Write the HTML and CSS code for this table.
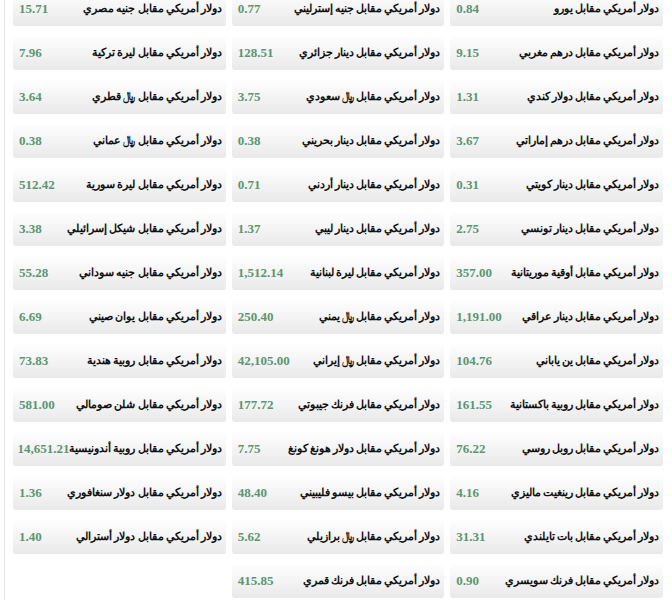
FILE: index.html
```html
<!DOCTYPE html>
<html lang="ar" dir="rtl">
<head>
  <meta charset="UTF-8" />
  <meta name="viewport" content="width=device-width, initial-scale=1" />
  <title>أسعار الدولار الأمريكي</title>
  <link rel="stylesheet" href="styles.css">
</head>
<body>

  <div class="wrap">
    <div class="rates">
      <div class="rate"><span class="name">دولار أمريكي مقابل يورو</span><span class="val">0.84</span></div>
      <div class="rate"><span class="name">دولار أمريكي مقابل جنيه إسترليني</span><span class="val">0.77</span></div>
      <div class="rate"><span class="name">دولار أمريكي مقابل جنيه مصري</span><span class="val">15.71</span></div>

      <div class="rate"><span class="name">دولار أمريكي مقابل درهم مغربي</span><span class="val">9.15</span></div>
      <div class="rate"><span class="name">دولار أمريكي مقابل دينار جزائري</span><span class="val">128.51</span></div>
      <div class="rate"><span class="name">دولار أمريكي مقابل ليرة تركية</span><span class="val">7.96</span></div>

      <div class="rate"><span class="name">دولار أمريكي مقابل دولار كندي</span><span class="val">1.31</span></div>
      <div class="rate"><span class="name">دولار أمريكي مقابل ﷼ سعودي</span><span class="val">3.75</span></div>
      <div class="rate"><span class="name">دولار أمريكي مقابل ﷼ قطري</span><span class="val">3.64</span></div>

      <div class="rate"><span class="name">دولار أمريكي مقابل درهم إماراتي</span><span class="val">3.67</span></div>
      <div class="rate"><span class="name">دولار أمريكي مقابل دينار بحريني</span><span class="val">0.38</span></div>
      <div class="rate"><span class="name">دولار أمريكي مقابل ﷼ عماني</span><span class="val">0.38</span></div>

      <div class="rate"><span class="name">دولار أمريكي مقابل دينار كويتي</span><span class="val">0.31</span></div>
      <div class="rate"><span class="name">دولار أمريكي مقابل دينار أردني</span><span class="val">0.71</span></div>
      <div class="rate"><span class="name">دولار أمريكي مقابل ليرة سورية</span><span class="val">512.42</span></div>

      <div class="rate"><span class="name">دولار أمريكي مقابل دينار تونسي</span><span class="val">2.75</span></div>
      <div class="rate"><span class="name">دولار أمريكي مقابل دينار ليبي</span><span class="val">1.37</span></div>
      <div class="rate"><span class="name">دولار أمريكي مقابل شيكل إسرائيلي</span><span class="val">3.38</span></div>

      <div class="rate"><span class="name">دولار أمريكي مقابل أوقية موريتانية</span><span class="val">357.00</span></div>
      <div class="rate"><span class="name">دولار أمريكي مقابل ليرة لبنانية</span><span class="val">1,512.14</span></div>
      <div class="rate"><span class="name">دولار أمريكي مقابل جنيه سوداني</span><span class="val">55.28</span></div>

      <div class="rate"><span class="name">دولار أمريكي مقابل دينار عراقي</span><span class="val">1,191.00</span></div>
      <div class="rate"><span class="name">دولار أمريكي مقابل ﷼ يمني</span><span class="val">250.40</span></div>
      <div class="rate"><span class="name">دولار أمريكي مقابل يوان صيني</span><span class="val">6.69</span></div>

      <div class="rate"><span class="name">دولار أمريكي مقابل ين ياباني</span><span class="val">104.76</span></div>
      <div class="rate"><span class="name">دولار أمريكي مقابل ﷼ إيراني</span><span class="val">42,105.00</span></div>
      <div class="rate"><span class="name">دولار أمريكي مقابل روبية هندية</span><span class="val">73.83</span></div>

      <div class="rate"><span class="name">دولار أمريكي مقابل روبية باكستانية</span><span class="val">161.55</span></div>
      <div class="rate"><span class="name">دولار أمريكي مقابل فرنك جيبوتي</span><span class="val">177.72</span></div>
      <div class="rate"><span class="name">دولار أمريكي مقابل شلن صومالي</span><span class="val">581.00</span></div>

      <div class="rate"><span class="name">دولار أمريكي مقابل روبل روسي</span><span class="val">76.22</span></div>
      <div class="rate"><span class="name">دولار أمريكي مقابل دولار هونغ كونغ</span><span class="val">7.75</span></div>
      <div class="rate"><span class="name">دولار أمريكي مقابل روبية أندونيسية</span><span class="val">14,651.21</span></div>

      <div class="rate"><span class="name">دولار أمريكي مقابل رينغيت ماليزي</span><span class="val">4.16</span></div>
      <div class="rate"><span class="name">دولار أمريكي مقابل بيسو فليبيني</span><span class="val">48.40</span></div>
      <div class="rate"><span class="name">دولار أمريكي مقابل دولار سنغافوري</span><span class="val">1.36</span></div>

      <div class="rate"><span class="name">دولار أمريكي مقابل بات تايلندي</span><span class="val">31.31</span></div>
      <div class="rate"><span class="name">دولار أمريكي مقابل ﷼ برازيلي</span><span class="val">5.62</span></div>
      <div class="rate"><span class="name">دولار أمريكي مقابل دولار أسترالي</span><span class="val">1.40</span></div>

      <div class="rate"><span class="name">دولار أمريكي مقابل فرنك سويسري</span><span class="val">0.90</span></div>
      <div class="rate"><span class="name">دولار أمريكي مقابل فرنك قمري</span><span class="val">415.85</span></div>
    </div>
  </div>

</body>
</html>
```

FILE: styles.css
```css
body {
  margin: 0;
  padding: 0;
  background-color: #ffffff;
  color: #111111;
  font-family: "Liberation Sans", Arial, sans-serif;
}

.wrap {
  margin: -9px 9px 0 4px;
  padding: 0 0 20px 8px;
  border-left: 1px solid #e4e4e4;
}

.rates {
  display: grid;
  grid-template-columns: repeat(3, minmax(0, 1fr));
  column-gap: 6px;
  row-gap: 9px;
}

.rate {
  display: flex;
  justify-content: space-between;
  align-items: center;
  height: 35px;
  padding: 0 4px 0 6px;
  background: linear-gradient(to bottom, #ffffff 0%, #f4f4f4 50%, #e9e9e9 100%);
  border-radius: 3px;
}

.name {
  font-size: 11px;
  font-weight: bold;
  word-spacing: -1px;
  white-space: nowrap;
}

.val {
  font-family: "Liberation Serif", "Times New Roman", serif;
  font-size: 13px;
  font-weight: bold;
  color: #5b9672;
  direction: ltr;
}
```
